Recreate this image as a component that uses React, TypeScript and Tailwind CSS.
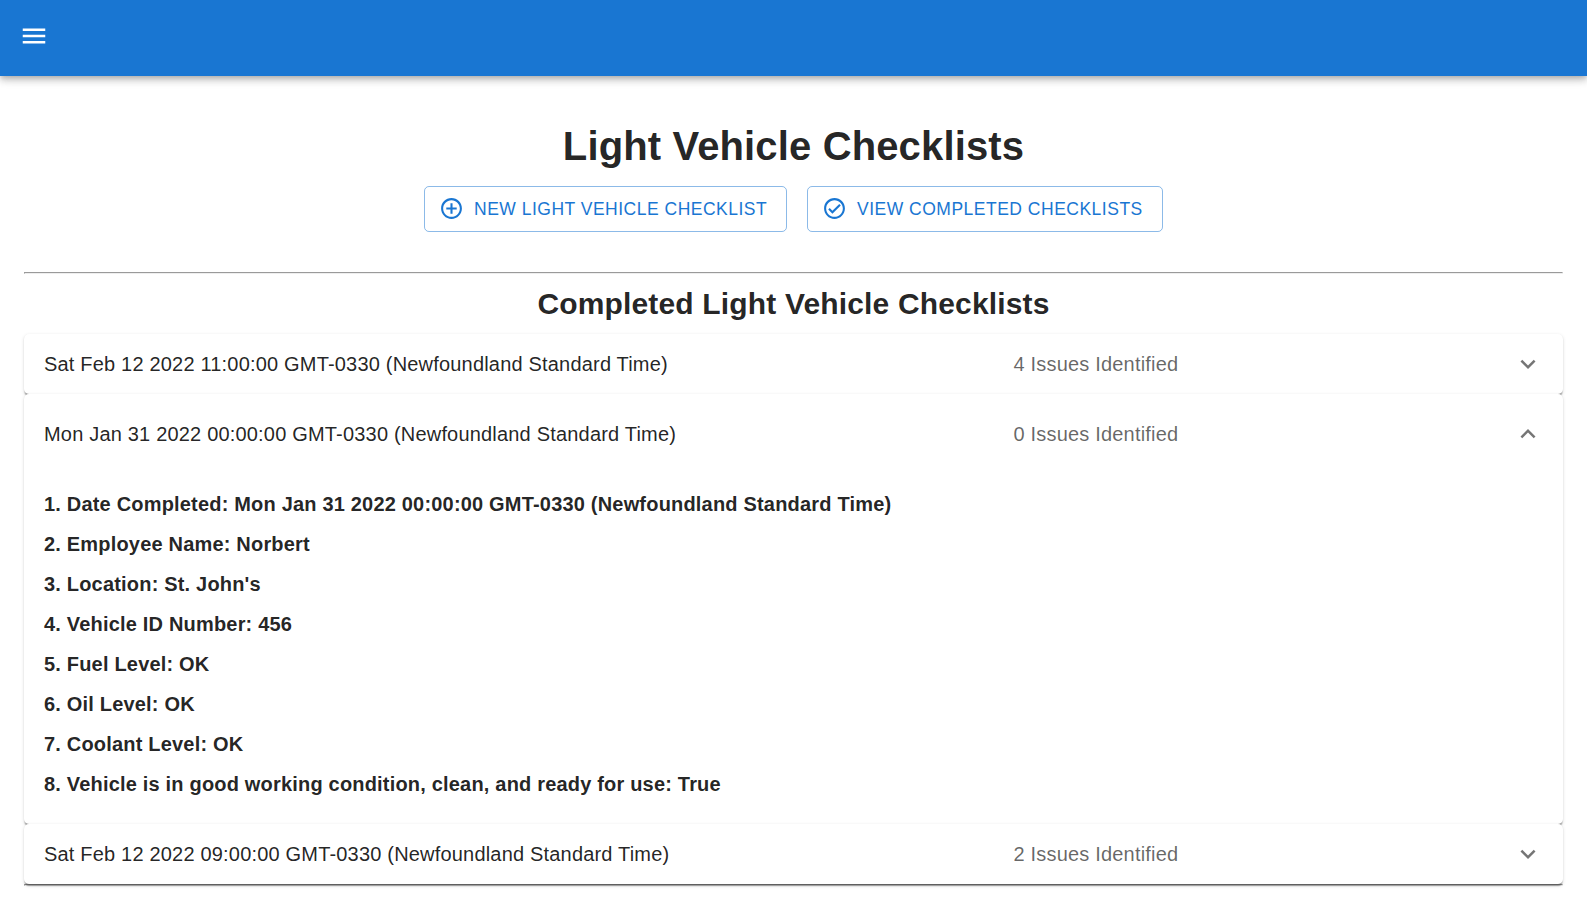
import React from "react";
import { MdMenu, MdExpandMore, MdOutlineCheckCircleOutline, MdAddCircleOutline } from "react-icons/md";

const SHADOW =
  "shadow-[0px_2.5px_1.25px_-1.25px_rgba(0,0,0,0.2),0px_1.25px_1.25px_0px_rgba(0,0,0,0.14),0px_1.25px_3.75px_0px_rgba(0,0,0,0.12)]";

const RULE = "h-[2px] border border-t-[#9a9a9a] border-r-[#eeeeee] border-b-[#eeeeee] border-l-[#9a9a9a]";

const answers = [
  "1. Date Completed: Mon Jan 31 2022 00:00:00 GMT-0330 (Newfoundland Standard Time)",
  "2. Employee Name: Norbert",
  "3. Location: St. John's",
  "4. Vehicle ID Number: 456",
  "5. Fuel Level: OK",
  "6. Oil Level: OK",
  "7. Coolant Level: OK",
  "8. Vehicle is in good working condition, clean, and ready for use: True",
];

function Row({ date, issues, open, children }: { date: string; issues: string; open?: boolean; children?: React.ReactNode }) {
  return (
    <section className={`relative rounded-[5px] bg-white ${SHADOW}`}>
      <button className={`flex w-full items-center px-5 text-left text-[20px] leading-[30px] tracking-[0.188px] ${open ? "h-20" : "h-[60px]"}`}>
        <span className="w-[969.5px] shrink-0">{date}</span>
        <span className="grow text-black/60">{issues}</span>
        <MdExpandMore className={`size-[30px] text-black/54 ${open ? "rotate-180" : ""}`} />
      </button>
      {children}
    </section>
  );
}

function ActionButton({ icon, label, width }: { icon: React.ReactNode; label: string; width: string }) {
  return (
    <button className={`flex h-[46px] items-center rounded-[5px] border border-[#1976d2]/50 pl-[14px] text-[17.5px] tracking-[0.5px] whitespace-nowrap text-[#1976d2] ${width}`}>
      <span className="mr-[10px] pb-px">{icon}</span>
      {label}
    </button>
  );
}

export default function App() {
  return (
    <div className="h-[920px] overflow-hidden bg-white font-['Liberation_Sans',Arial,sans-serif] text-black/87">
      <header className="flex h-[76px] items-center bg-[#1976d2] pl-[19px] pb-[4px] text-white shadow-[0px_2.5px_5px_-1.25px_rgba(0,0,0,0.2),0px_5px_6.25px_0px_rgba(0,0,0,0.14),0px_1.25px_12.5px_0px_rgba(0,0,0,0.12)]">
        <MdMenu className="size-[30px]" />
      </header>
      <main className="px-6">
        <h1 className="mt-[46px] text-center text-[40px] leading-[48px] font-bold tracking-[0.14px]">Light Vehicle Checklists</h1>
        <div className="mt-4 flex justify-center gap-5">
          <ActionButton width="w-[363px]" icon={<MdAddCircleOutline className="size-[25px]" />} label="NEW LIGHT VEHICLE CHECKLIST" />
          <ActionButton width="w-[356px]" icon={<MdOutlineCheckCircleOutline className="size-[25px]" />} label="VIEW COMPLETED CHECKLISTS" />
        </div>
        <hr className={`mt-10 ${RULE}`} />
        <h2 className="mt-[11px] mb-3 text-center text-[30px] leading-[37px] font-bold tracking-[0.16px]">Completed Light Vehicle Checklists</h2>
        <Row date="Sat Feb 12 2022 11:00:00 GMT-0330 (Newfoundland Standard Time)" issues="4 Issues Identified" />
        <Row date="Mon Jan 31 2022 00:00:00 GMT-0330 (Newfoundland Standard Time)" issues="0 Issues Identified" open>
          <div className="px-5 pt-[10px] pb-5 text-[20px] font-bold tracking-[0.188px]">
            {answers.map((a) => (
              <p key={a} className="h-10 leading-10">{a}</p>
            ))}
          </div>
        </Row>
        <Row date="Sat Feb 12 2022 09:00:00 GMT-0330 (Newfoundland Standard Time)" issues="2 Issues Identified" />
        <hr className={RULE} />
      </main>
    </div>
  );
}
